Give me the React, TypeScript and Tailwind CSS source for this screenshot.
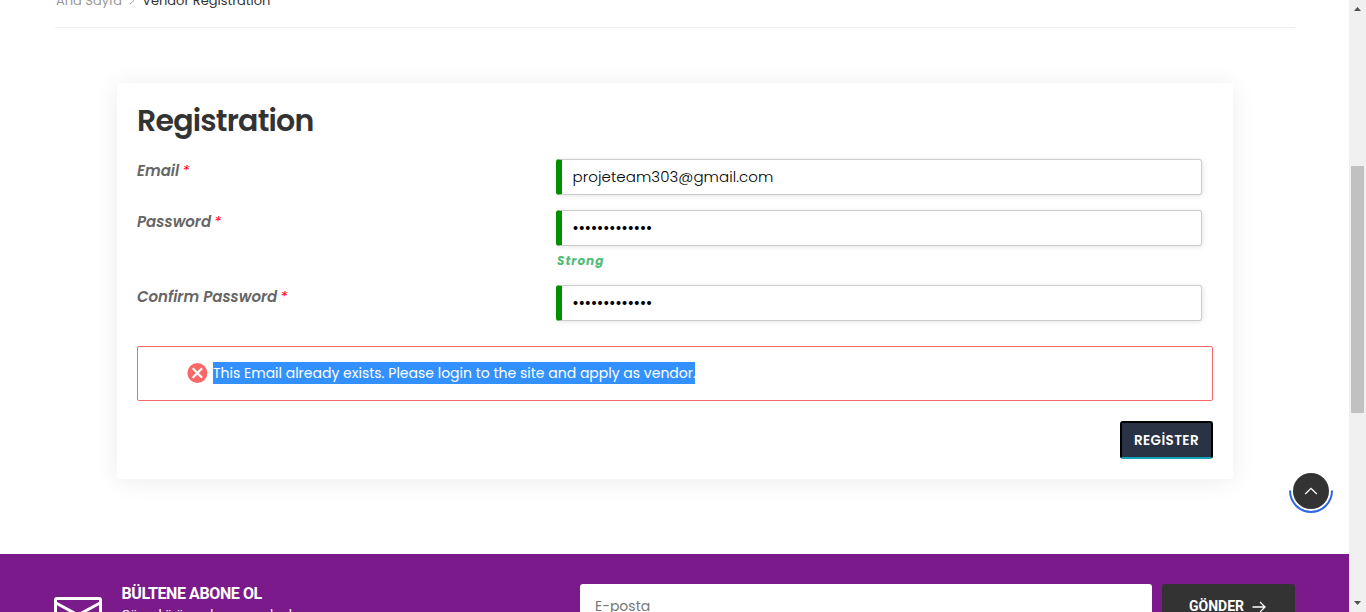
import React from 'react';

const SANS = "font-['Poppins','Inter',sans-serif]";

function Label({ text }: { text: string }) {
  return (
    <div className="w-[419px] shrink-0 pt-[1px] text-[15px] leading-[22px] text-[#666]">
      <span className="font-semibold italic">{text}</span>
      <span className="ml-[3px] text-[15px] italic text-[#ff0015]">*</span>
    </div>
  );
}

function Field({ children }: { children: React.ReactNode }) {
  return (
    <div className="flex h-[36px] w-[646px] items-center rounded-[3px] border border-l-[6px] border-[#ccc] border-l-[#008f00] bg-white pl-[10.5px] text-black shadow-[1px_1px_5px_rgba(0,0,0,0.1)]">
      {children}
    </div>
  );
}

function Dots() {
  return <span className="-ml-[0.5px] font-['Inter',sans-serif] text-[12.5px] leading-none tracking-[-0.9px]">•••••••••••••</span>;
}

export default function App() {
  return (
    <div className={'flex h-[612px] w-[1366px] overflow-hidden bg-white ' + SANS}>
      <main className="relative flex h-[612px] w-[1349px] shrink-0 flex-col overflow-hidden">
        <nav className="mx-[55px] flex h-[28px] w-[1240px] shrink-0 items-start border-b border-[#eee] text-[13px] leading-[20px]">
          <div className="-mt-[9px] flex items-center pl-[1px] whitespace-nowrap">
            <span className="text-[#999]">Ana Sayfa</span>
            <svg className="mx-[7px] -mt-[1px]" width="6" height="9" viewBox="0 0 6 9" fill="none" stroke="#aaa">
              <path d="M0.8 0.8 5 4.5 0.8 8.2" />
            </svg>
            <span className="text-[#333]">Vendor Registration</span>
          </div>
        </nav>

        <section className="mt-[55px] ml-[117px] flex h-[396px] w-[1116px] shrink-0 flex-col rounded-[3px] bg-white px-[20px] pt-[19px] shadow-[0_2px_25px_rgba(0,0,0,0.08)]">
          <h1 className="h-[57px] text-[30px] leading-[38px] font-semibold tracking-[-0.78px] text-[#333]">
            <span>Registration</span>
          </h1>
          <div className="flex h-[51px]">
            <Label text="Email" />
            <Field>
              <span className="text-[15px] font-light tracking-[0.07px]">projeteam303@gmail.com</span>
            </Field>
          </div>
          <div className="flex h-[75px]">
            <Label text="Password" />
            <div>
              <Field><Dots /></Field>
              <div className="mt-[5px] ml-[1px] text-[12px] leading-[20px] font-bold tracking-[1px] text-[#52bd79] italic">
                <span>Strong</span>
              </div>
            </div>
          </div>
          <div className="flex h-[61px]">
            <Label text="Confirm Password" />
            <Field><Dots /></Field>
          </div>
          <div className="flex h-[55px] w-[1076px] shrink-0 items-center rounded-[2px] border border-[#f96868] pb-[2px] pl-[49px]">
            <svg width="21" height="20" viewBox="0 0 21 20" fill="none">
              <circle cx="10.4" cy="10" r="10" fill="#f96868" />
              <path d="M5.7 5.3 15.1 14.7M15.1 5.3 5.7 14.7" stroke="#fff" strokeWidth="2.2" />
            </svg>
            <span className="ml-[5px] h-[22px] w-[482px] overflow-hidden bg-[#3390ff] text-[14px] leading-[22px] whitespace-nowrap text-white">
              This Email already exists. Please login to the site and apply as vendor.
            </span>
          </div>
          <button className="mt-[20px] flex h-[38px] w-[93px] shrink-0 items-center justify-center self-end rounded-[3px] border-2 border-black border-b-[#17a2b8] bg-[#2a3344] pt-[3px] text-[13.5px] font-semibold tracking-[0.4px] text-white">
            <span>REGİSTER</span>
          </button>
        </section>

        <footer className="mt-[75px] flex h-[58px] shrink-0 items-start overflow-hidden bg-[#7a1a8b] pl-[54px] text-white">
          <svg className="mt-[43px] shrink-0" width="48" height="34" viewBox="0 0 48 34" fill="none" stroke="#fff" strokeWidth="3">
            <rect x="1.5" y="1.5" width="45" height="31" rx="1.5" />
            <path d="M2 6 24 18 46 6" />
          </svg>
          <div className="mt-[30px] ml-[19.5px] w-[458.5px] shrink-0 font-['Roboto',sans-serif] whitespace-nowrap">
            <div className="text-[16px] leading-[20px] font-bold tracking-[-0.4px]">
              <span>BÜLTENE ABONE OL</span>
            </div>
            <div className="mt-[1px] text-[13px] leading-[20px]">
              <span>Güncel ürün ve kampanyalardan</span>
            </div>
          </div>
          <div className="mt-[30px] h-[45px] w-[572px] shrink-0 rounded-[3px] bg-white pt-[11px] pl-[15px] text-[14px] leading-[22px] text-[#777]">
            <span>E-posta</span>
          </div>
          <div className="mt-[30px] ml-[10px] flex h-[45px] w-[133px] shrink-0 items-center rounded-[3px] bg-[#333] pl-[27px] font-['Roboto',sans-serif] text-[14px] font-bold">
            <span>GÖNDER</span>
            <svg className="ml-[8px]" width="14" height="12" viewBox="0 0 14 12" fill="none" stroke="#fff" strokeWidth="1.3">
              <path d="M0.5 6H13M8 1l5 5-5 5" />
            </svg>
          </div>
        </footer>

        <svg className="absolute top-[469px] left-[1289px]" width="44" height="44" viewBox="0 0 44 44" fill="none">
          <circle cx="22" cy="22" r="18" fill="#333" />
          <path d="M1 21.5a21 21.5 0 0 0 42 0" stroke="#2f66e6" strokeWidth="2" />
          <path d="M16.2 25 22 19.3 27.8 25" stroke="#fff" strokeWidth="1.3" />
        </svg>
      </main>

      <aside className="flex h-[612px] w-[17px] shrink-0 flex-col items-center bg-[#f0f0f0]">
        <svg className="mt-[7px] h-[4px] w-[7px] shrink-0" viewBox="0 0 7 4" fill="#505050">
          <path d="M0 4 3.5 0 7 4z" />
        </svg>
        <div className="mt-[155px] mr-px h-[247px] w-[13px] shrink-0 bg-[#c1c1c1]" />
        <svg className="mt-[188px] h-[4px] w-[7px] shrink-0" viewBox="0 0 7 4" fill="#505050">
          <path d="M0 0 3.5 4 7 0z" />
        </svg>
      </aside>
    </div>
  );
}
